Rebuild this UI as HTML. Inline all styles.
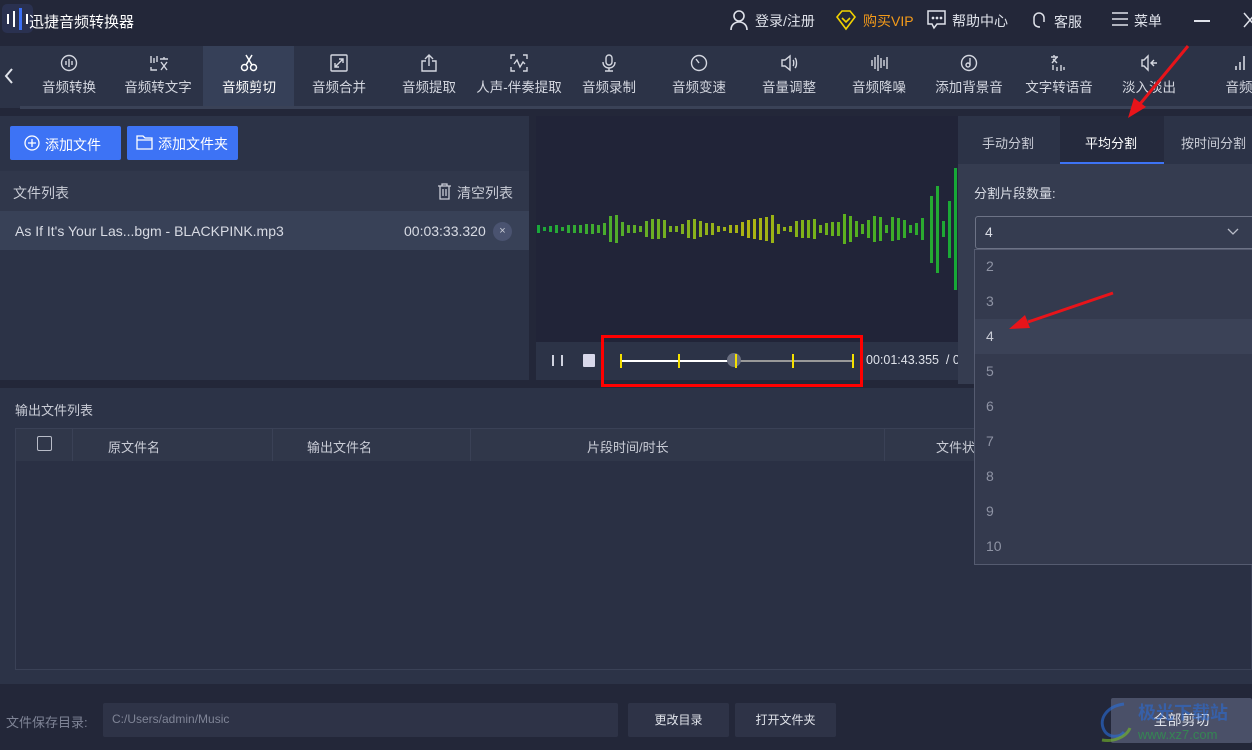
<!DOCTYPE html>
<html><head><meta charset="utf-8">
<style>
*{margin:0;padding:0;box-sizing:border-box}
body{width:1252px;height:750px;overflow:hidden;background:#232739;font-family:"Liberation Sans","Noto Sans CJK SC",sans-serif;color:#d8dbe4;position:relative}
.abs{position:absolute}
.t{white-space:nowrap}
.nav{left:0;top:46px;width:1252px;height:62px;background:#2c3347}
.ni{position:absolute;top:0;width:90px;height:62px;text-align:center;font-size:13.5px;color:#d4d7e0}
.ni svg{position:absolute;left:36px;top:8px}
.ni span{position:absolute;left:0;right:0;top:30px}
</style></head><body>

<div class="abs" style="left:2px;top:4px;width:31px;height:29px;background:#2a3150;border-radius:5px"></div>
<svg class="abs" style="left:5px;top:8px" width="26" height="22"><rect x="2" y="6" width="2" height="10" fill="#fff"/><rect x="8" y="3" width="2" height="16" fill="#fff"/><rect x="14" y="0" width="3" height="22" fill="#3b6ff5"/><rect x="21" y="6" width="2" height="10" fill="#fff"/></svg>
<div class="abs t" style="left:29px;top:11px;font-size:15px;color:#fff">迅捷音频转换器</div>

<svg class="abs" style="left:729px;top:9px" width="20" height="22" fill="none" stroke="#dfe2ea" stroke-width="1.6"><circle cx="10" cy="7" r="5"/><path d="M2 21c0-5 3.5-8 8-8s8 3 8 8"/></svg>
<div class="abs t" style="left:755px;top:11px;font-size:14px;color:#dfe2ea">登录/注册</div>
<svg class="abs" style="left:835px;top:9px" width="22" height="22" fill="none" stroke="#f2d200" stroke-width="1.6"><path d="M2 8l5-6h8l5 6-9 12z"/><path d="M7 9l4 4 4-4"/></svg>
<div class="abs t" style="left:863px;top:11px;font-size:14px;color:#f39a1a">购买VIP</div>
<svg class="abs" style="left:927px;top:9px" width="20" height="21" fill="none" stroke="#dfe2ea" stroke-width="1.5"><path d="M1 2h17v13h-8l-3 4-2-4H1z"/><circle cx="6" cy="9" r=".6" fill="#dfe2ea"/><circle cx="10" cy="9" r=".6" fill="#dfe2ea"/><circle cx="14" cy="9" r=".6" fill="#dfe2ea"/></svg>
<div class="abs t" style="left:952px;top:11px;font-size:14px;color:#dfe2ea">帮助中心</div>
<svg class="abs" style="left:1031px;top:11px" width="16" height="18" fill="none" stroke="#dfe2ea" stroke-width="1.5"><path d="M3 11V7a5 5 0 0110 0v4M3 11c0 3 2 5 6 5"/></svg>
<div class="abs t" style="left:1054px;top:12px;font-size:14px;color:#dfe2ea">客服</div>
<svg class="abs" style="left:1111px;top:11px" width="18" height="16" stroke="#dfe2ea" stroke-width="1.5"><path d="M1 2h16M1 8h16M1 14h16"/></svg>
<div class="abs t" style="left:1134px;top:11px;font-size:14px;color:#dfe2ea">菜单</div>
<div class="abs" style="left:1194px;top:20px;width:16px;height:1.5px;background:#dfe2ea"></div>
<svg class="abs" style="left:1243px;top:12px" width="10" height="16" stroke="#dfe2ea" stroke-width="1.5"><path d="M1 1l12 14M13 1L1 15"/></svg>

<div class="abs nav">
 <svg class="abs" style="left:4px;top:22px" width="10" height="16" fill="none" stroke="#e0e3ea" stroke-width="2"><path d="M8 1L2 8l6 7"/></svg>
 <div class="abs" style="left:203px;top:0;width:91px;height:60px;background:#364058"></div>
 <div class="abs" style="left:20px;top:60px;width:1232px;height:3px;background:#3a4257"></div>
 <div class="ni" style="left:24px"><svg width="18" height="18" fill="none" stroke="#d4d7e0" stroke-width="1.4"><circle cx="9" cy="9" r="7.5"/><path d="M6 7v4M9 5v8M12 7v4"/></svg><span>音频转换</span></div>
 <div class="ni" style="left:113px"><svg width="20" height="18" fill="none" stroke="#d4d7e0" stroke-width="1.4"><path d="M2 2v7M5 4v5M8 2v6M2 13v3h6M11 5h8M15 3v2M12 8l6 8M18 8l-6 8"/></svg><span>音频转文字</span></div>
 <div class="ni" style="left:204px"><svg width="18" height="18" fill="none" stroke="#fff" stroke-width="1.5"><circle cx="4.5" cy="13.5" r="3"/><circle cx="13.5" cy="13.5" r="3"/><path d="M6 11L12 1M12 11L6 1"/></svg><span style="color:#fff">音频剪切</span></div>
 <div class="ni" style="left:294px"><svg width="18" height="18" fill="none" stroke="#d4d7e0" stroke-width="1.4"><rect x="1" y="1" width="16" height="16" rx="1"/><path d="M5 13l8-8M5 9v4h4M13 9V5H9"/></svg><span>音频合并</span></div>
 <div class="ni" style="left:384px"><svg width="18" height="18" fill="none" stroke="#d4d7e0" stroke-width="1.4"><path d="M6 7H2v10h14V7h-4M9 12V1M5 5l4-4 4 4"/></svg><span>音频提取</span></div>
 <div class="ni" style="left:474px"><svg width="18" height="18" fill="none" stroke="#d4d7e0" stroke-width="1.4"><path d="M1 5V1h4M13 1h4v4M17 13v4h-4M5 17H1v-4M4 10l3-4 3 7 3-5 2 2"/></svg><span>人声-伴奏提取</span></div>
 <div class="ni" style="left:564px"><svg width="18" height="18" fill="none" stroke="#d4d7e0" stroke-width="1.4"><rect x="6" y="1" width="6" height="10" rx="3"/><path d="M3 8c0 4 3 6 6 6s6-2 6-6M9 14v3M5 17h8"/></svg><span>音频录制</span></div>
 <div class="ni" style="left:654px"><svg width="18" height="18" fill="none" stroke="#d4d7e0" stroke-width="1.4"><circle cx="9" cy="9" r="7.5"/><path d="M9 9L6 5"/></svg><span>音频变速</span></div>
 <div class="ni" style="left:744px"><svg width="18" height="18" fill="none" stroke="#d4d7e0" stroke-width="1.4"><path d="M2 6h3l5-4v14l-5-4H2zM13 6c1 1 1 5 0 6M15 4c2 2 2 8 0 10"/></svg><span>音量调整</span></div>
 <div class="ni" style="left:834px"><svg width="18" height="18" fill="none" stroke="#d4d7e0" stroke-width="1.4"><path d="M2 6v6M5 3v12M8 1v16M11 4v10M14 6v6M17 3v12"/></svg><span>音频降噪</span></div>
 <div class="ni" style="left:924px"><svg width="18" height="18" fill="none" stroke="#d4d7e0" stroke-width="1.4"><circle cx="9" cy="9" r="7.5"/><circle cx="8" cy="11" r="2"/><path d="M10 11V4"/></svg><span>添加背景音</span></div>
 <div class="ni" style="left:1014px"><svg width="20" height="18" fill="none" stroke="#d4d7e0" stroke-width="1.4"><path d="M4 1v2M1 3h7M2 9l5-6M7 9L3 5M3 11v5M7 13v4M11 11v6M14 13v3"/></svg><span>文字转语音</span></div>
 <div class="ni" style="left:1104px"><svg width="18" height="18" fill="none" stroke="#d4d7e0" stroke-width="1.4"><path d="M2 6h2l4-4v14l-4-4H2zM11 9h6M14 6l-3 3 3 3"/></svg><span>淡入淡出</span></div>
 <div class="ni" style="left:1194px"><svg width="18" height="18" fill="none" stroke="#d4d7e0" stroke-width="1.6"><path d="M6 16v-4M10 16V8M14 16V2"/></svg><span>音频</span></div>
</div>

<div class="abs" style="left:0;top:116px;width:529px;height:264px;background:#2c3347"></div>
<div class="abs" style="left:10px;top:126px;width:111px;height:34px;background:#3d73f5;border-radius:2px"></div>
<svg class="abs" style="left:24px;top:135px" width="16" height="16" fill="none" stroke="#fff" stroke-width="1.3"><circle cx="8" cy="8" r="7"/><path d="M8 4v8M4 8h8"/></svg>
<div class="abs t" style="left:45px;top:135px;font-size:14px;color:#fff">添加文件</div>
<div class="abs" style="left:127px;top:126px;width:111px;height:34px;background:#3d73f5;border-radius:2px"></div>
<svg class="abs" style="left:136px;top:134px" width="17" height="16" fill="none" stroke="#fff" stroke-width="1.3"><path d="M1 2h6l2 2h7v11H1zM1 6h15"/></svg>
<div class="abs t" style="left:158px;top:134px;font-size:14px;color:#fff">添加文件夹</div>
<div class="abs" style="left:0;top:171px;width:529px;height:40px;background:#30374b"></div>
<div class="abs t" style="left:13px;top:183px;font-size:14px;color:#c9ccd6">文件列表</div>
<svg class="abs" style="left:437px;top:183px" width="15" height="17" fill="none" stroke="#c9ccd6" stroke-width="1.3"><path d="M1 3h13M5 3V1h5v2M3 3v13h9V3M6 6v7M9 6v7"/></svg>
<div class="abs t" style="left:457px;top:183px;font-size:14px;color:#c9ccd6">清空列表</div>
<div class="abs" style="left:0;top:211px;width:529px;height:39px;background:#384157"></div>
<div class="abs t" style="left:15px;top:223px;font-size:14px;color:#d8dbe4">As If It's Your Las...bgm - BLACKPINK.mp3</div>
<div class="abs t" style="left:404px;top:223px;font-size:14px;color:#d8dbe4">00:03:33.320</div>
<div class="abs" style="left:493px;top:222px;width:19px;height:19px;border-radius:50%;background:#4a5370;color:#c9ccd6;font-size:11px;text-align:center;line-height:18px">×</div>

<div class="abs" style="left:536px;top:116px;width:422px;height:226px;background:#212438"></div>
<svg class="abs" style="left:0;top:0" width="1252" height="340">
<defs><linearGradient id="g" gradientUnits="userSpaceOnUse" x1="537" y1="0" x2="960" y2="0"><stop offset="0" stop-color="#18a83a"/><stop offset=".5" stop-color="#b0b412"/><stop offset=".75" stop-color="#55b020"/><stop offset="1" stop-color="#14a838"/></linearGradient></defs>
<g fill="url(#g)">
<rect x="537" y="225" width="3" height="8"/><rect x="543" y="227" width="3" height="4"/><rect x="549" y="226" width="3" height="6"/><rect x="555" y="225" width="3" height="8"/><rect x="561" y="227" width="3" height="4"/><rect x="567" y="225" width="3" height="8"/><rect x="573" y="225" width="3" height="8"/><rect x="579" y="225" width="3" height="8"/><rect x="585" y="224" width="3" height="10"/><rect x="591" y="224" width="3" height="10"/><rect x="597" y="225" width="3" height="8"/><rect x="603" y="223" width="3" height="12"/><rect x="609" y="216" width="3" height="26"/><rect x="615" y="215" width="3" height="28"/><rect x="621" y="222" width="3" height="14"/><rect x="627" y="225" width="3" height="8"/><rect x="633" y="225" width="3" height="8"/><rect x="639" y="226" width="3" height="6"/><rect x="645" y="221" width="3" height="16"/><rect x="651" y="219" width="3" height="20"/><rect x="657" y="219" width="3" height="20"/><rect x="663" y="220" width="3" height="18"/><rect x="669" y="226" width="3" height="6"/><rect x="675" y="226" width="3" height="6"/><rect x="681" y="224" width="3" height="10"/><rect x="687" y="220" width="3" height="18"/><rect x="693" y="219" width="3" height="20"/><rect x="699" y="221" width="3" height="16"/><rect x="705" y="223" width="3" height="12"/><rect x="711" y="223" width="3" height="12"/><rect x="717" y="226" width="3" height="6"/><rect x="723" y="227" width="3" height="4"/><rect x="729" y="225" width="3" height="8"/><rect x="735" y="225" width="3" height="8"/><rect x="741" y="222" width="3" height="14"/><rect x="747" y="220" width="3" height="18"/><rect x="753" y="219" width="3" height="20"/><rect x="759" y="218" width="3" height="22"/><rect x="765" y="217" width="3" height="24"/><rect x="771" y="215" width="3" height="28"/><rect x="777" y="224" width="3" height="10"/><rect x="783" y="227" width="3" height="4"/><rect x="789" y="226" width="3" height="6"/><rect x="795" y="221" width="3" height="16"/><rect x="801" y="220" width="3" height="18"/><rect x="807" y="220" width="3" height="18"/><rect x="813" y="219" width="3" height="20"/><rect x="819" y="225" width="3" height="8"/><rect x="825" y="223" width="3" height="12"/><rect x="831" y="222" width="3" height="14"/><rect x="837" y="222" width="3" height="14"/><rect x="843" y="214" width="3" height="30"/><rect x="849" y="216" width="3" height="26"/><rect x="855" y="221" width="3" height="16"/><rect x="861" y="224" width="3" height="10"/><rect x="867" y="220" width="3" height="18"/><rect x="873" y="216" width="3" height="26"/><rect x="879" y="217" width="3" height="24"/><rect x="885" y="225" width="3" height="8"/><rect x="891" y="217" width="3" height="24"/><rect x="897" y="218" width="3" height="22"/><rect x="903" y="220" width="3" height="18"/><rect x="909" y="225" width="3" height="8"/><rect x="915" y="223" width="3" height="12"/><rect x="921" y="218" width="3" height="22"/>
<rect x="930" y="196" width="3" height="67"/><rect x="936" y="186" width="3" height="87"/><rect x="942" y="221" width="3" height="16"/><rect x="948" y="201" width="3" height="57"/><rect x="954" y="168" width="3" height="122"/><rect x="958" y="156" width="1" height="147"/>
</g></svg>

<div class="abs" style="left:536px;top:342px;width:440px;height:38px;background:#2c3347"></div>
<div class="abs" style="left:552px;top:355px;width:2px;height:11px;background:#d0d3e0"></div>
<div class="abs" style="left:561px;top:355px;width:2px;height:11px;background:#d0d3e0"></div>
<div class="abs" style="left:583px;top:354px;width:12px;height:13px;background:#d8d8ea;border-radius:1px"></div>
<div class="abs" style="left:621px;top:360px;width:114px;height:2px;background:#fff"></div>
<div class="abs" style="left:735px;top:360px;width:119px;height:2px;background:#999"></div>
<div class="abs" style="left:727px;top:353px;width:14px;height:14px;border-radius:50%;background:#6a6f80"></div>
<div class="abs" style="left:620px;top:354px;width:2px;height:14px;background:#f5e000"></div>
<div class="abs" style="left:678px;top:354px;width:2px;height:14px;background:#f5e000"></div>
<div class="abs" style="left:735px;top:354px;width:2px;height:14px;background:#f5e000"></div>
<div class="abs" style="left:792px;top:354px;width:2px;height:14px;background:#f5e000"></div>
<div class="abs" style="left:852px;top:354px;width:2px;height:14px;background:#f5e000"></div>
<div class="abs t" style="left:866px;top:353px;font-size:12.5px;color:#dfe2ea">00:01:43.355 &nbsp;/ 00:03</div>
<div class="abs" style="left:601px;top:335px;width:262px;height:52px;border:3px solid #f00"></div>

<div class="abs" style="left:0;top:388px;width:1252px;height:296px;background:#2c3347"></div>
<div class="abs t" style="left:15px;top:400px;font-size:13px;color:#c9ccd6">输出文件列表</div>
<div class="abs" style="left:15px;top:428px;width:1237px;height:242px;border:1px solid #3a4156;background:#2a3044"></div>
<div class="abs" style="left:16px;top:429px;width:1236px;height:32px;background:#30374a"></div>
<div class="abs" style="left:72px;top:429px;width:1px;height:32px;background:#3a4156"></div>
<div class="abs" style="left:272px;top:429px;width:1px;height:32px;background:#3a4156"></div>
<div class="abs" style="left:470px;top:429px;width:1px;height:32px;background:#3a4156"></div>
<div class="abs" style="left:884px;top:429px;width:1px;height:32px;background:#3a4156"></div>
<div class="abs" style="left:37px;top:436px;width:15px;height:15px;border:1.5px solid #b8bcc8;border-radius:2px"></div>
<div class="abs t" style="left:108px;top:437px;font-size:13px;color:#c9ccd6">原文件名</div>
<div class="abs t" style="left:307px;top:437px;font-size:13px;color:#c9ccd6">输出文件名</div>
<div class="abs t" style="left:587px;top:437px;font-size:13px;color:#c9ccd6">片段时间/时长</div>
<div class="abs t" style="left:936px;top:437px;font-size:13px;color:#c9ccd6">文件状态</div>

<div class="abs" style="left:958px;top:116px;width:294px;height:268px;background:#353c50"></div>
<div class="abs" style="left:958px;top:116px;width:294px;height:48px;background:#2c3347"></div>
<div class="abs" style="left:1060px;top:116px;width:104px;height:48px;background:#252a3d"></div>
<div class="abs" style="left:1060px;top:162px;width:104px;height:2px;background:#3d73f5"></div>
<div class="abs t" style="left:982px;top:133px;font-size:13px;color:#c9ccd6">手动分割</div>
<div class="abs t" style="left:1085px;top:133px;font-size:13px;color:#fff">平均分割</div>
<div class="abs t" style="left:1181px;top:133px;font-size:13px;color:#c9ccd6">按时间分割</div>
<div class="abs t" style="left:974px;top:183px;font-size:13px;color:#d8dbe4">分割片段数量:</div>
<div class="abs" style="left:975px;top:216px;width:280px;height:33px;border:1px solid #6d7386;border-radius:3px;background:#353c50"></div>
<div class="abs t" style="left:985px;top:224px;font-size:14px;color:#d8dbe4">4</div>
<svg class="abs" style="left:1227px;top:228px" width="12" height="8" fill="none" stroke="#b8bcc8" stroke-width="1.3"><path d="M1 1l5 5 5-5"/></svg>
<div class="abs" style="left:974px;top:249px;width:278px;height:316px;background:#343a4e;border:1px solid #555b70;border-right:none"></div>
<div class="abs" style="left:975px;top:319px;width:277px;height:35px;background:#3b4257"></div>
<div class="abs" style="left:986px;top:249px;font-size:14px;color:#8e93a4;line-height:35px">2<br>3<br><span style="color:#c9ccd6">4</span><br>5<br>6<br>7<br>8<br>9<br>10</div>

<div class="abs t" style="left:6px;top:712px;font-size:13px;color:#7f8496">文件保存目录:</div>
<div class="abs" style="left:103px;top:703px;width:515px;height:34px;background:#2e3347;border-radius:2px"></div>
<div class="abs t" style="left:112px;top:712px;font-size:12px;color:#7f8496">C:/Users/admin/Music</div>
<div class="abs" style="left:628px;top:703px;width:101px;height:34px;background:#2e3347;border-radius:2px;font-size:12px;color:#e0e3ea;text-align:center;line-height:34px">更改目录</div>
<div class="abs" style="left:735px;top:703px;width:101px;height:34px;background:#2e3347;border-radius:2px;font-size:12px;color:#e0e3ea;text-align:center;line-height:34px">打开文件夹</div>
<div class="abs" style="left:1111px;top:698px;width:141px;height:45px;background:#4a5068;border-radius:2px;font-size:14px;color:#dfe2ea;text-align:center;line-height:45px">全部剪切</div>
<div class="abs t" style="left:1138px;top:699px;font-size:18px;color:rgba(40,110,220,.55);font-weight:bold">极光下载站</div>
<div class="abs t" style="left:1138px;top:727px;font-size:13px;color:rgba(40,170,70,.6)">www.xz7.com</div>
<svg class="abs" style="left:1094px;top:700px" width="44" height="44" fill="none" stroke-width="3"><path d="M30 4C14 6 4 18 10 30c4 8 16 8 20 2" stroke="rgba(40,110,220,.6)"/><path d="M8 40c10 2 24-2 28-12" stroke="rgba(120,190,40,.6)"/></svg>

<svg class="abs" style="left:0;top:0" width="1252" height="750">
<path d="M1188 46L1140 104" stroke="#e8141a" stroke-width="3"/><path d="M1128 118l6-20 12 9z" fill="#e8141a"/>
<path d="M1113 293L1028 322" stroke="#e8141a" stroke-width="3"/><path d="M1009 329l16-14 5 13z" fill="#e8141a"/>
</svg>
</body></html>
